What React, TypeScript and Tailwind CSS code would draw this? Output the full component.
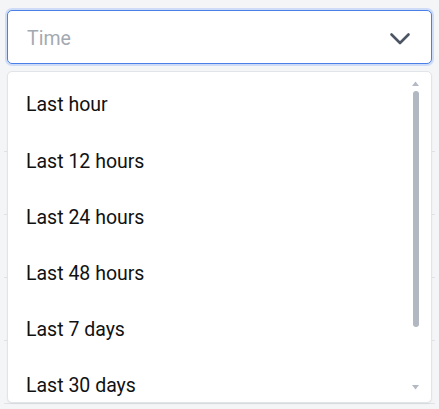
const options = ['Last hour', 'Last 12 hours', 'Last 24 hours', 'Last 48 hours', 'Last 7 days', 'Last 30 days'];

function Chevron() {
  return (
    <svg width="22" height="14" viewBox="0 0 22 14" fill="none">
      <path d="M2.5 2.5 L11 11 L19.5 2.5" stroke="#4b5563" strokeWidth="2.6" strokeLinecap="round" strokeLinejoin="round" />
    </svg>
  );
}

export default function App() {
  return (
    <div className="relative w-[439px] h-[409px] overflow-hidden bg-[#f4f5f7] font-['Roboto',sans-serif]">
      <div className="px-[7px] pt-[10px]">
        <div className="flex h-[54px] items-center justify-between rounded-[5px] border border-[#4a7fe8] bg-white pl-[19px] pr-[20px] ring-2 ring-[#cfdcf8]">
          <span className="mt-[3px] text-[19.5px] text-[#a3a9b2]">Time</span>
          <div className="mt-[3px]">
            <Chevron />
          </div>
        </div>
      </div>

      {/* table rows behind the menu */}
      <div className="mx-[4px] mt-[25px]">
        {[0, 1, 2, 3, 4].map((i) => (
          <div key={i} className="h-[63px] border-b border-[#dfe2e6]" />
        ))}
      </div>

      <div className="absolute left-[7px] top-[71px] h-[332px] w-[425px] rounded-[5px] border border-[#e1e4e8] bg-white shadow-[0_1px_2px_rgba(0,0,0,0.05)]">
        <div className="pt-[5px]">
          {options.map((o) => (
            <div key={o} className="flex h-[56.2px] items-center pl-[18px] text-[19.5px] text-[#111111]">
              {o}
            </div>
          ))}
        </div>
        <div className="absolute right-[12px] top-[9px] flex h-[309px] w-[7px] flex-col items-center">
          <svg width="7" height="5" viewBox="0 0 7 5">
            <path d="M0 5 L3.5 0.5 L7 5 Z" fill="#b4bac3" />
          </svg>
          <div className="mt-[5px] h-[236px] w-[6px] rounded-full bg-[#b1b8c1]" />
          <div className="flex-1" />
          <svg width="7" height="5" viewBox="0 0 7 5">
            <path d="M0 0 L7 0 L3.5 4.5 Z" fill="#b4bac3" />
          </svg>
        </div>
      </div>
    </div>
  );
}
